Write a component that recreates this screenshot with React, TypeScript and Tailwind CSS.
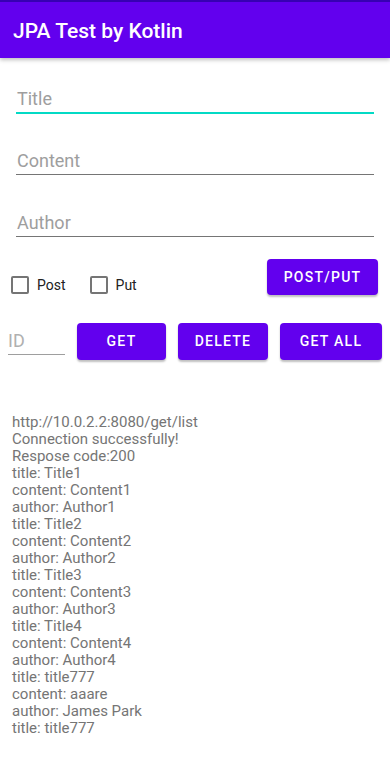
import React from "react";

const lines = [
  "http://10.0.2.2:8080/get/list",
  "Connection successfully!",
  "Respose code:200",
  "title: Title1",
  "content: Content1",
  "author: Author1",
  "title: Title2",
  "content: Content2",
  "author: Author2",
  "title: Title3",
  "content: Content3",
  "author: Author3",
  "title: Title4",
  "content: Content4",
  "author: Author4",
  "title: title777",
  "content: aaare",
  "author: James Park",
  "title: title777",
];

function Btn({ label, w }: { label: string; w: string }) {
  return (
    <div
      className={`${w} h-[37px] rounded-[4px] bg-[#6200EE] text-white text-[14px] font-medium tracking-[1.25px] flex items-center justify-center shadow-[0_2px_2px_rgba(0,0,0,0.25)]`}
    >
      {label}
    </div>
  );
}

export default function App() {
  return (
    <div
      className="w-[390px] h-[761px] bg-white overflow-hidden"
      style={{ fontFamily: "Roboto, 'Noto Sans', sans-serif" }}
    >
      <div className="h-[58px] bg-[#6200EE] border-t-2 border-[#3700B3] shadow-[0_2px_4px_rgba(0,0,0,0.25)] flex items-center pl-[13px] pt-[3px] relative">
        <span className="text-white text-[21px] font-medium">JPA Test by Kotlin</span>
      </div>

      <div className="px-4">
        <div className="mt-[28px] border-b-2 border-[#03DAC5]">
          <div className="text-[18px] leading-[26px] text-[#9e9e9e] pl-[1px]">Title</div>
        </div>
        <div className="mt-[34px] border-b border-[#757575]">
          <div className="text-[18px] leading-[26px] text-[#9e9e9e] pl-[1px]">Content</div>
        </div>
        <div className="mt-[35px] border-b border-[#757575]">
          <div className="text-[18px] leading-[26px] text-[#9e9e9e] pl-[1px]">Author</div>
        </div>
      </div>

      <div className="mt-[22px] h-[36px] flex items-start justify-between pl-[11px] pr-[12px]">
        <div className="flex items-center mt-[17px] h-[18px]">
          <div className="w-[18px] h-[18px] border-2 border-[#757575] rounded-[2px]" />
          <span className="ml-[8px] text-[14px] leading-[18px] text-[#212121]">Post</span>
          <div className="ml-[24px] w-[18px] h-[18px] border-2 border-[#757575] rounded-[2px]" />
          <span className="ml-[8px] text-[14px] leading-[18px] text-[#212121]">Put</span>
        </div>
        <div className="w-[111px] h-[36px] rounded-[4px] bg-[#6200EE] text-white text-[14px] font-medium tracking-[1.25px] flex items-center justify-center shadow-[0_2px_2px_rgba(0,0,0,0.25)]">
          POST/PUT
        </div>
      </div>

      <div className="mt-[28px] flex items-start pl-[8px]">
        <div className="w-[57px] mt-[5px] border-b border-[#9e9e9e]">
          <div className="text-[18px] leading-[26px] text-[#b0b0b0]">ID</div>
        </div>
        <div className="ml-[12px]">
          <Btn label="GET" w="w-[89px]" />
        </div>
        <div className="ml-[12px]">
          <Btn label="DELETE" w="w-[90px]" />
        </div>
        <div className="ml-[12px]">
          <Btn label="GET ALL" w="w-[102px]" />
        </div>
      </div>

      <div className="mt-[54px] pl-[12px] text-[15px] leading-[17px] text-[#757575]">
        {lines.map((l, i) => (
          <div key={i}>{l}</div>
        ))}
      </div>
    </div>
  );
}
